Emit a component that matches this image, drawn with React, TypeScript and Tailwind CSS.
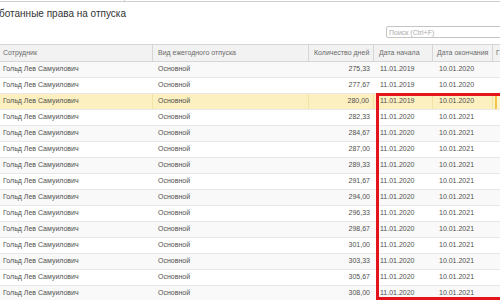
import React from "react";

type Row = {
  days: string;
  start: string;
  end: string;
};

const days = [
  "275,33",
  "277,67",
  "280,00",
  "282,33",
  "284,67",
  "287,00",
  "289,33",
  "291,67",
  "294,00",
  "296,33",
  "298,67",
  "301,00",
  "303,33",
  "305,67",
  "308,00",
];

const rows: Row[] = days.map((d, i) => ({
  days: d,
  start: i < 3 ? "11.01.2019" : "11.01.2020",
  end: i < 3 ? "10.01.2020" : "10.01.2021",
}));

const SELECTED = 2;

export default function App() {
  return (
    <div
      className="relative w-[500px] h-[300px] overflow-hidden bg-white text-[#505050]"
      style={{ fontFamily: '"Liberation Sans", Arial, sans-serif' }}
    >
      {/* верхняя граница вкладки */}
      <div className="flex h-[2px]">
        <div className="w-[125px] border-r border-b border-[#cfcfcf]" />
        <div className="flex-1 border-b border-[#cfcfcf]" />
      </div>

      {/* Заголовок */}
      <div className="mt-[6px] -ml-[1px] h-[12px] text-[10px] leading-[12px] text-[#333] whitespace-nowrap">
        ботанные права на отпуска
      </div>

      {/* Поиск */}
      <div className="mt-[6px] flex pl-[386px]">
        <div className="flex h-[12px] w-[130px] flex-none items-center rounded-[2px] border border-[#c4c4c4] pl-[2px] text-[7px] leading-none text-[#ababab]">
          Поиск (Ctrl+F)
        </div>
      </div>

      {/* Шапка таблицы */}
      <div className="mt-[6px] flex h-[18px] border-y border-[#d6d6d6] bg-[#f2f2f2] text-[7px] text-[#6a6a6a] whitespace-nowrap">
        <div className="flex w-[153px] flex-none items-center border-r border-[#d6d6d6] pl-[3px]">
          Сотрудник
        </div>
        <div className="flex w-[156px] flex-none items-center border-r border-[#d6d6d6] pl-[5px]">
          Вид ежегодного отпуска
        </div>
        <div className="flex w-[65px] flex-none items-center border-r border-[#d6d6d6] pl-[5px]">
          Количество дней
        </div>
        <div className="flex w-[59px] flex-none items-center border-r border-[#d6d6d6] pl-[5px]">
          Дата начала
        </div>
        <div className="flex w-[60px] flex-none items-center border-r border-[#d6d6d6] pl-[4px]">
          Дата окончания
        </div>
        <div className="flex flex-1 items-center pl-[3px]">Г</div>
      </div>

      {/* Строки */}
      {rows.map((r, i) => {
        const sel = i === SELECTED;
        const bg = sel ? "bg-[#fcefc0]" : i % 2 === 0 ? "bg-[#f9f9f9]" : "bg-white";
        const div = sel ? "border-r border-[#f1e2a6]" : "";
        return (
          <div
            key={i}
            className={`flex h-[16px] border-b border-[#e8e8e8] text-[7px] whitespace-nowrap ${bg}`}
          >
            <div className={`flex w-[153px] flex-none items-center pl-[3px] ${div}`}>
              Гольд Лев Самуилович
            </div>
            <div className={`flex w-[156px] flex-none items-center pl-[5px] ${div}`}>
              Основной
            </div>
            <div className={`flex w-[65px] flex-none items-center justify-end pr-[4px] ${div}`}>
              {r.days}
            </div>
            <div className={`flex w-[59px] flex-none items-center pl-[6px] ${div}`}>
              {r.start}
            </div>
            <div className={`flex w-[60px] flex-none items-center pl-[6px] ${div}`}>
              {r.end}
            </div>
            <div
              className={`flex-1 ${sel ? "ml-[2px] border-l-2 border-[#f3c445] bg-[#fdf3cc]" : ""}`}
            />
          </div>
        );
      })}

      {/* Красная рамка выделения */}
      <div className="absolute left-[376px] top-[93px] h-[207px] w-[200px] border-[3px] border-[#e3141c]" />
    </div>
  );
}
